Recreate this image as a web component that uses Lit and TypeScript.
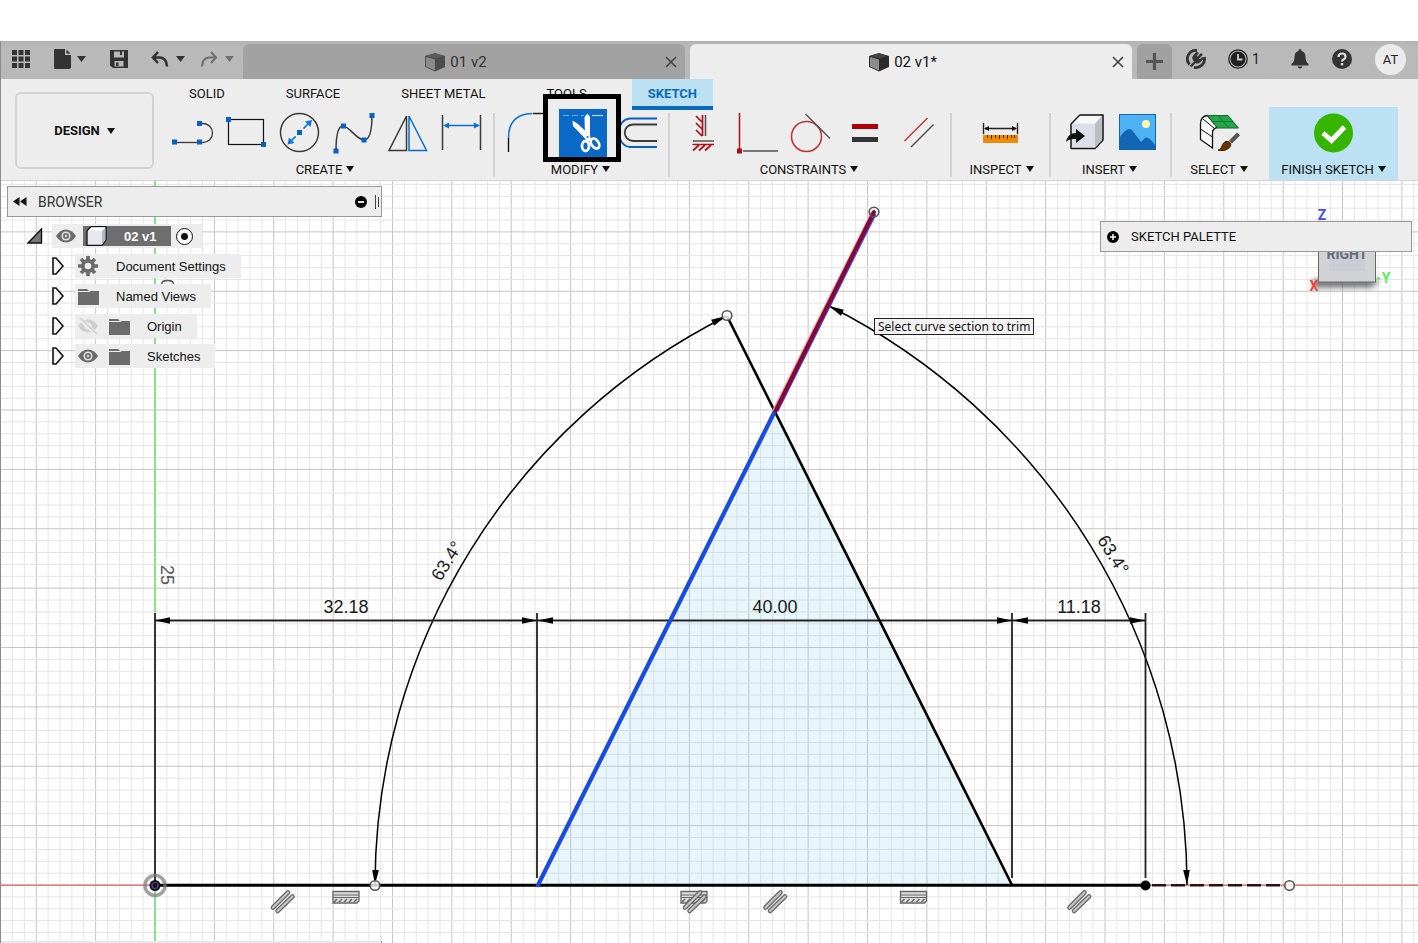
import { LitElement, html, svg, css } from "lit";
import { customElement } from "lit/decorators.js";
import { classMap } from "lit/directives/class-map.js";

const BLUE = "#0a5fc4";
const DARK = "#3a3a3a";
const RED = "#b01118";

const dot = (x: number, y: number, fill = BLUE) =>
  svg`<rect x=${x - 2.5} y=${y - 2.5} width="5" height="5" fill=${fill} />`;

const tool: Record<string, unknown> = {
  line: svg`<g fill="none" stroke=${DARK} stroke-width="1.3"><path d="M9 33.5H35" /><path d="M35 14.5H38A9.5 9.5 0 0 1 38 33.5H35" /></g>${dot(9.5, 33)}${dot(34.5, 33)}${dot(34.5, 14.5)}`,
  rect: svg`<rect x="9.5" y="10.5" width="35" height="25" fill="none" stroke="#111" stroke-width="1.2" />${dot(9.5, 10.5)}${dot(44.5, 35.5)}`,
  circle: svg`<circle cx="26.5" cy="23.5" r="19" fill="none" stroke=${DARK} stroke-width="1.5" /><path d="M17 33L36 14" stroke="#0a78e0" stroke-width="1.6" stroke-dasharray="8 3 5 3 8" /><path d="M39 11L37.5 18L32 12.500ZM14.500 35.500L16 28.500L21.500 34Z" fill="#0a78e0" />${dot(26.5, 23.5)}`,
  spline: svg`<path d="M9 42C9 30 10 17 16 17S30 31 37 31S45 16 45 6" fill="none" stroke=${DARK} stroke-width="1.500" />${dot(9, 42)}${dot(16.5, 17)}${dot(37, 31)}${dot(45, 6.5)}`,
  mirror: svg`<path d="M25.500 7V41.500H8Z" fill="none" stroke=${DARK} stroke-width="1.500" /><path d="M28 7V41.500H45.500Z" fill="none" stroke="#0a6ed0" stroke-width="1.500" />`,
  dimension: svg`<path d="M7.500 6V41M45.500 6V41" stroke=${DARK} stroke-width="1.500" /><path d="M11 16.500H42" stroke="#0a6ed0" stroke-width="1.500" /><path d="M8 16.500L14 13.500V19.500ZM45 16.500L39 13.500V19.500Z" fill="#0a6ed0" />`,
  fillet: svg`<path d="M8.500 29V43" stroke="#111" stroke-width="1.400" /><path d="M8.500 29C8.500 14 16 5 32 4.500" fill="none" stroke="#0a6ed0" stroke-width="1.500" /><path d="M33 4.500H48" stroke="#111" stroke-width="1.400" />`,
  trim: svg`<rect x="5" y="0" width="48" height="48" fill="#0a69c4" /><path d="M9 6.500H30" stroke="#5fb2ec" stroke-width="1.200" stroke-dasharray="6 3" /><path d="M38 6.500H49" stroke="#c3d9c9" stroke-width="1.200" /><path d="M30.500 8L33.500 4.500L36 8V29H31ZM18.500 11.500L24 15L36.500 27L32.500 31L19 17Z" fill="#fff" /><g fill="none" stroke="#fff" stroke-width="2.800"><ellipse cx="31.500" cy="37" rx="3.500" ry="5" /><ellipse cx="41" cy="34.500" rx="3.500" ry="5.500" transform="rotate(-35 41 34.500)" /></g><path d="M31 28L35 26L38 31L33 33Z" fill="#fff" /><circle cx="33.500" cy="28" r="1" fill="#0a69c4" />`,
  offset: svg`<path d="M49 9.500H22C7 11 7 36 22 38H49" fill="none" stroke="#0a5fc4" stroke-width="1.800" /><path d="M49 15.500H25C14 16 14 31 25 32H49" fill="none" stroke=${DARK} stroke-width="1.800" />`,
  fix: svg`<g fill="none"><path d="M26.500 6V27M20 7L26 13M20 14L26 20M20 21L26 27M16.500 35.500H38M23 36L17 41.500M29 36L23 41.500M35 36L29 41.500" stroke=${RED} stroke-width="1.700" /><path d="M29.500 6V27M17 32H38" stroke="#505050" stroke-width="1.500" /></g>`,
  perpendicular: svg`<path d="M9.500 4V41" stroke=${RED} stroke-width="1.500" /><path d="M13 42H48" stroke="#505050" stroke-width="1.500" />${dot(9.5, 42, "#a80f14")}`,
  tangent: svg`<circle cx="22.500" cy="27.500" r="15" fill="none" stroke="#c0303a" stroke-width="1.500" /><path d="M21.500 5L46 29.500" stroke="#505050" stroke-width="1.500" />`,
  equal: svg`<rect x="14" y="15" width="26" height="5" fill="#b00008" /><rect x="14" y="28" width="26" height="5" fill="#333" />`,
  parallel: svg`<path d="M12.500 32L35.500 9" stroke="#c0303a" stroke-width="1.500" /><path d="M19 38L41.500 15.500" stroke="#505050" stroke-width="1.500" />`,
  measure: svg`<path d="M10.500 14V25M44.500 14V25M12 19.500H43" stroke="#222" stroke-width="1.400" /><path d="M11 19.500L16 17V22ZM44 19.500L39 17V22Z" fill="#111" /><rect x="10" y="26" width="35" height="8" fill="#f08a05" /><path d="M14.500 26v3M18.500 26v4M22.500 26v3M26.500 26v4M30.500 26v3M34.500 26v4M38.500 26v3M41.500 26v3" stroke="#4a2a00" />`,
  insert: svg`<path d="M24 6H47V31L39 39.500H15V15Z" fill="#e9ebf0" stroke="#111" stroke-width="1.500" stroke-linejoin="round" /><path d="M46 7L39 15V39L46 31Z" fill="#b9bdc8" /><path d="M16 15H39V38H16Z" fill="#dcdfe7" /><path d="M24 7H45L38.500 14.500H17Z" fill="#f8f8fa" /><path d="M10 33C11 27 15 24 20 24V20L29 27L20 34V30C16 30 13 30 10 33Z" fill="#111" />`,
  image: svg`<rect x="9.500" y="5.500" width="36" height="35" fill="#4fb2f5" stroke="#1464b4" /><path d="M10 28C14 22 19 18 22 21L31 33L35 29C38 27 42 32 45 36V40H10Z" fill="#1266b5" /><circle cx="36" cy="15" r="4" fill="#fdf7b0" />`,
  select: svg`<path d="M15.500 6.500C10 7 8.500 11 8.500 15V30.500L20.500 39V24C20.500 21 22 19 25.500 18.500Z" fill="#fafafa" stroke="#111" stroke-width="1.300" /><path d="M8.500 20L20.500 28M11 10L22 19" stroke="#111" stroke-width="1" /><path d="M15.500 6.500H36L46.500 19H25.500Z" fill="#27a54a" stroke="#0c6a28" stroke-width="1" /><path d="M26 6.500L37 19M20 12.500H41" stroke="#0f7a30" /><path d="M38.500 33L46.500 25" stroke="#555" stroke-width="4" /><path d="M26 41C31 40 29 34 34 32.500C39 32 40 36 37.500 38.500C34 42 29 42 26 41Z" fill="#6a3208" stroke="#3e1c04" />`,
  finish: svg`<circle cx="26.500" cy="24" r="19.500" fill="#35b400" /><path d="M16 24L24.500 31.500L37.500 18" fill="none" stroke="#fff" stroke-width="5" />`,
};

interface Group { name: string; title: string; tools: [string, string][] }
const groups: Group[] = [
  { name: "create", title: "CREATE", tools: [["line", "Line"], ["rect", "Rectangle"], ["circle", "Circle"], ["spline", "Spline"], ["mirror", "Mirror"], ["dimension", "Sketch dimension"]] },
  { name: "modify", title: "MODIFY", tools: [["fillet", "Fillet"], ["trim", "Trim"], ["offset", "Offset"]] },
  { name: "constraints", title: "CONSTRAINTS", tools: [["fix", "Horizontal/Vertical"], ["perpendicular", "Perpendicular"], ["tangent", "Tangent"], ["equal", "Equal"], ["parallel", "Parallel"]] },
  { name: "inspect", title: "INSPECT", tools: [["measure", "Measure"]] },
  { name: "insert", title: "INSERT", tools: [["insert", "Insert derive"], ["image", "Canvas"]] },
  { name: "select", title: "SELECT", tools: [["select", "Select"]] },
  { name: "finish", title: "FINISH SKETCH", tools: [["finish", "Finish sketch"]] },
];

const base = css`
  :host { display: block; font-family: Roboto, "Liberation Sans", sans-serif; color: #111; }
  *, *::before { box-sizing: border-box; }
  button { border: 0; padding: 0; margin: 0; background: none; font: inherit; color: inherit; display: flex; align-items: center; justify-content: center; }
  svg { display: block; flex: none; }
`;

const docCube = (active: boolean) => html`<svg width="20" height="20" viewBox="0 0 20 20" aria-hidden="true">
  <path d="M0 4L10 1L20 4V15L10 19.500L0 15Z" fill=${active ? "#2b2b2b" : "#4c4c4c"} />
  <path d="M1 5L10 7.500V18.500L1 14.500Z" fill=${active ? "#8d8d8d" : "#8a8a8a"} />
  <path d="M1 4L10 1.500L19 4L10 6.500Z" fill=${active ? "#444" : "#5c5c5c"} /></svg>`;

@customElement("title-bar")
class TitleBar extends LitElement {
  static styles = [base, css`
    .bar { display: flex; height: 38px; background: linear-gradient(#b2b2b2, #bababa 6px, #b8b8b8); }
    .quick { display: flex; width: 242px; padding: 0 0 2px 8px; align-items: center; color: #333; }
    .quick button { height: 36px; }
    .apps { width: 24px; margin-right: 16px; }
    .file { width: 40px; gap: 3px; margin-right: 18px; }
    .save { width: 24px; margin-right: 19px; }
    .undo { width: 36px; gap: 7px; margin-right: 13px; }
    .redo { width: 36px; gap: 7px; color: #707070; }
    .tabs { flex: 1; display: flex; gap: 5px; padding-top: 3px; min-width: 0; }
    .tab { flex: 1; display: flex; align-items: center; border-radius: 6px 6px 0 0; background: #a2a2a2; padding-left: 12px; font-size: 15px; color: #333; }
    .tab.active { background: #ededed; color: #111; }
    .name { flex: 1; display: flex; justify-content: center; align-items: center; gap: 5px; height: 34px; }
    .close { width: 28px; height: 34px; }
    .add { width: 35px; background: #a0a0a0; border-radius: 6px 6px 0 0; }
    .right { display: flex; align-items: center; padding: 0 0 2px 3px; color: #333; }
    .right button { width: 42px; height: 32px; font-size: 14px; }
    .right .jobs { width: 62px; gap: 4px; justify-content: flex-start; padding-left: 11px; color: #222; }
    .right .account { width: 55px; }
    .avatar { width: 31px; height: 31px; line-height: 31px; border-radius: 50%; background: #ebebeb; font-size: 13px; text-align: center; color: #222; }
  `];
  caret = html`<svg width="9" height="6" viewBox="0 0 9 6" aria-hidden="true"><path d="M0 0H9L4.500 6Z" fill="currentColor" /></svg>`;
  tab(label: string, active: boolean) {
    return html`<div class=${classMap({ tab: true, active })}>
      <button class="name">${docCube(active)}${label}</button>
      <button class="close" aria-label="Close ${label}"><svg width="12" height="12" viewBox="0 0 12 12"><path d="M1 1L11 11M11 1L1 11" stroke="#444" stroke-width="1.600" /></svg></button>
    </div>`;
  }
  render() {
    return html`<header class="bar">
      <div class="quick">
        <button class="apps" aria-label="Data panel"><svg width="18" height="18" viewBox="0 0 18 18"><path fill="currentColor" d="M0 0h5v5H0zM6.500 0h5v5h-5zM13 0h5v5h-5zM0 6.500h5v5H0zM6.500 6.500h5v5h-5zM13 6.500h5v5h-5zM0 13h5v5H0zM6.500 13h5v5h-5zM13 13h5v5h-5z" /></svg></button>
        <button class="file" aria-label="File"><svg width="21" height="20" viewBox="0 0 21 20"><path d="M2 0H12V6H18V18Q18 20 16 20H2Q1 20 1 18V1Q1 0 2 0ZM13.500 0.500L17.500 4.500H13.500Z" fill="currentColor" /></svg>${this.caret}</button>
        <button class="save" aria-label="Save"><svg width="18" height="18" viewBox="0 0 18 18"><path fill-rule="evenodd" d="M0 0H18V18H3L0 15.500ZM4 1.500V7.500H14V1.500H12V5H10V1.500ZM4.500 11V16.500H13.500V11ZM6 12.500H8.500V16H6Z" fill="currentColor" /></svg></button>
        <button class="undo" aria-label="Undo"><svg width="18" height="17" viewBox="0 0 18 17"><path d="M7 1L2 6.500L7 12M2 6.500H9Q15.500 7 16 15.500" fill="none" stroke="currentColor" stroke-width="2.600" /></svg>${this.caret}</button>
        <button class="redo" aria-label="Redo"><svg width="18" height="17" viewBox="0 0 18 17"><path d="M11 1L16 6.500L11 12M16 6.500H9Q2.500 7 2 15.500" fill="none" stroke="currentColor" stroke-width="2.200" /></svg>${this.caret}</button>
      </div>
      <nav class="tabs" aria-label="Documents">
        ${this.tab("01 v2", false)}${this.tab("02 v1*", true)}
        <button class="add" aria-label="New document"><svg width="17" height="17" viewBox="0 0 17 17"><path d="M8.500 0V17M0 8.500H17" stroke="#555" stroke-width="3.200" /></svg></button>
      </nav>
      <div class="right">
        <button aria-label="Extensions"><svg width="20" height="20" viewBox="0 0 20 20"><path d="M11 1.500A8.500 8.500 0 0 0 3.500 15.500M8 18.300A8.500 8.500 0 0 0 18.300 8" fill="none" stroke="currentColor" stroke-width="2.800" /><path d="M3.500 17L8 12.500Q4.500 9 8 5.500L11 2.500L12.800 4.200L10.500 7L11.300 7.800L15 4L16.800 5.800L13 9.500L13.800 10.300L16.500 8L18 9.500L14.500 13Q11.500 15.500 9.500 14L6 18Z" fill="currentColor" /></svg></button>
        <button class="jobs"><svg width="20" height="20" viewBox="0 0 20 20" aria-hidden="true"><circle cx="10" cy="10" r="9.200" fill="none" stroke="currentColor" stroke-width="1.300" /><circle cx="10" cy="10" r="7.500" fill="currentColor" /><path d="M10 5V10.500H14.500" fill="none" stroke="#ccc" stroke-width="1.800" /></svg>1</button>
        <button aria-label="Notifications"><svg width="18" height="20" viewBox="0 0 18 20"><path d="M9 0Q10.500 0 10.500 2Q14.500 3 14.500 8Q14.500 13 17.500 15V16.500H0.500V15Q3.500 13 3.500 8Q3.500 3 7.500 2Q7.500 0 9 0ZM6.500 17.500H11.500Q11 19.500 9 19.500T6.500 17.500Z" fill="currentColor" /></svg></button>
        <button aria-label="Help"><svg width="20" height="20" viewBox="0 0 20 20"><circle cx="10" cy="10" r="10" fill="currentColor" /><path d="M6.500 8Q6.500 4.500 10 4.500T13.500 7.500Q13.500 9.500 11.500 10.500Q10 11.300 10 12.500" fill="none" stroke="#ddd" stroke-width="2.200" /><rect x="8.800" y="14" width="2.400" height="2.400" fill="#ddd" /></svg></button>
        <button class="account" aria-label="Account"><span class="avatar">AT</span></button>
      </div>
    </header>`;
  }
}

@customElement("tool-ribbon")
class ToolRibbon extends LitElement {
  static styles = [base, css`
    .ribbon { display: flex; background: #ededed; font-size: 13px; border-bottom: 1px solid #d4d4d4; }
    .design { width: 139px; height: 77px; margin: 13px 1px 0 14px; border: 2px solid #d2d2d2; border-radius: 6px; font-weight: 700; gap: 7px; }
    .main { flex: 1; min-width: 0; }
    .tabs { display: flex; height: 28px; gap: 29px; padding-left: 18px; }
    .tabs button { height: 28px; padding: 0 16px; }
    .tabs .current { height: 31px; padding-top: 1px; background: #bbe1f2; border-bottom: 4px solid #0a69b8; color: #0a69b8; font-weight: 700; }
    .groups { display: flex; height: 73px; }
    .group { position: relative; padding-top: 2px; flex: none; }
    .group:not(.finish):not(.select)::after { content: ""; position: absolute; right: 0; top: 6px; width: 2px; height: 64px; background: #d3d3d3; }
    .tools { display: flex; justify-content: center; height: 48px; }
    .create .tools { padding-left: 4px; }
    .modify .tools, .inspect .tools, .insert .tools { padding-right: 3px; }
    .title { width: 100%; height: 24px; gap: 4px; }
    .modify .title, .constraints .title, .insert .title { padding-right: 4px; }
    .create { width: 340px; } .modify { width: 175px; } .constraints { width: 282px; }
    .inspect { width: 99px; } .insert { width: 121px; } .select { width: 94px; margin-right: 3px; }
    .finish { width: 129px; background: #bbe1f2; }
    .callout { position: absolute; left: 50%; top: -13px; width: 78px; height: 68px; margin-left: -40px; border: 5px solid #000; pointer-events: none; }
  `];
  caret = html`<svg width="8" height="6" viewBox="0 0 8 6" aria-hidden="true"><path d="M0 0H8L4 6Z" fill="#111" /></svg>`;
  render() {
    return html`<div class="ribbon">
      <button class="design">DESIGN ${this.caret}</button>
      <div class="main">
        <nav class="tabs" aria-label="Workspace tabs">
          ${["SOLID", "SURFACE", "SHEET METAL", "TOOLS", "SKETCH"].map((t) => html`<button class=${classMap({ current: t === "SKETCH" })}>${t}</button>`)}
        </nav>
        <div class="groups">
          ${groups.map((g) => html`<section class="group ${g.name}">
            <div class="tools">${g.tools.map(([id, label]) => html`<button aria-label=${label}><svg width="54" height="48" viewBox="0 0 54 48">${tool[id]}</svg></button>`)}</div>
            <button class="title">${g.title}${this.caret}</button>
            ${g.name === "modify" ? html`<div class="callout"></div>` : ""}
          </section>`)}
        </div>
      </div>
    </div>`;
  }
}

const eye = html`<svg width="20" height="14" viewBox="0 0 20 14"><path d="M0 7Q4 0.500 10 0.500T20 7Q16 13.500 10 13.500T0 7Z" fill="#6b6b6b" /><circle cx="10" cy="7" r="4.500" fill="#e4e4e4" /><circle cx="10" cy="7" r="3" fill="#6b6b6b" /><circle cx="10" cy="7" r="1.200" fill="#ddd" /></svg>`;
const eyeOff = html`<svg width="20" height="16" viewBox="0 0 20 16"><path d="M0 8Q4 1.500 10 1.500T20 8Q16 14.500 10 14.500T0 8Z" fill="#cfcfcf" /><circle cx="10" cy="8" r="3.500" fill="#ededed" /><path d="M1 0L18 16" stroke="#ededed" stroke-width="4" /><path d="M2 0L19 16" stroke="#cfcfcf" stroke-width="1.600" /></svg>`;
const folder = html`<svg width="21" height="17" viewBox="0 0 21 17"><path d="M0 1H9L11 3H0ZM0 4H11L13 3H21V17H0Z" fill="#6b6b6b" /></svg>`;
const gear = html`<svg width="20" height="20" viewBox="0 0 20 20"><g stroke="#6b6b6b" stroke-width="3.600"><path d="M10 0V20M0 10H20M3 3L17 17M17 3L3 17" /></g><circle cx="10" cy="10" r="7" fill="#6b6b6b" /><circle cx="10" cy="10" r="3.300" fill="#ededed" /></svg>`;

@customElement("browser-panel")
class BrowserPanel extends LitElement {
  static styles = [base, css`
    :host { width: 375px; font-size: 14px; }
    .head { display: flex; align-items: center; height: 31px; border: 1px solid #999; background: #ededed; padding: 0 2px 0 5px; gap: 11px; margin-bottom: 7px; }
    .head h2 { flex: 1; margin: 0; font-size: 14px; font-weight: 400; color: #333; }
    .head .grip { margin-left: -3px; }
    ul { list-style: none; margin: 0; padding: 0; font: 13px "Liberation Sans", Arial, sans-serif; }
    li { display: flex; align-items: center; height: 24px; margin-bottom: 6px; }
    .open { width: 16px; height: 16px; margin-left: 20px; }
    .fold { width: 12px; height: 18px; margin-left: 45px; }
    .item { display: flex; align-items: center; height: 24px; background: #ededed; margin-left: 11px; padding: 0 15px 0 3px; }
    .item button { width: 20px; height: 20px; margin-right: 11px; }
    .folder { margin-right: 7px; width: 21px; }
    .label { margin-left: 10px; }
    .root { margin-left: 9px; padding: 0 9px 0 4px; gap: 4px; }
    .root button { margin-right: 3px; }
    .chip { display: flex; align-items: center; height: 20px; width: 88px; margin: 0; padding-left: 3px; gap: 17px; background: #6e6e6e; color: #fff; font-weight: 700; }
    input { appearance: none; width: 17px; height: 17px; margin: 0 0 0 1px; border: 1.5px solid #111; border-radius: 50%; background: radial-gradient(circle, #111 0 3px, #fff 4px); }
  `];
  fold = html`<button class="fold" aria-label="Expand"><svg width="12" height="18" viewBox="0 0 12 18"><path d="M1 1H4L11 9L4 17H1Z" fill="#f4f4f4" stroke="#111" stroke-width="1.600" /></svg></button>`;
  row(icon: unknown, label: string, vis?: unknown) {
    return html`<li>${this.fold}<div class="item">${vis ? html`<button aria-label="Toggle ${label}">${vis}</button>` : ""}<span class="folder">${icon}</span><span class="label">${label}</span></div></li>`;
  }
  render() {
    return html`<div class="head">
        <button aria-label="Collapse browser"><svg width="14" height="9" viewBox="0 0 14 9"><path d="M6.500 0V9L0 4.500ZM13.500 0V9L7 4.500Z" fill="#111" /></svg></button>
        <h2>BROWSER</h2>
        <button aria-label="Minimize"><svg width="12" height="12" viewBox="0 0 12 12"><circle cx="6" cy="6" r="6" fill="#000" /><path d="M3 6H9" stroke="#fff" stroke-width="1.800" /></svg></button>
        <svg class="grip" width="4" height="14" viewBox="0 0 4 14"><path d="M0.500 0V14M3.500 2V12" stroke="#444" /></svg>
      </div>
      <ul>
        <li><button class="open" aria-label="Collapse"><svg width="16" height="16" viewBox="0 0 16 16"><path d="M14.500 1V15H1Z" fill="#777" stroke="#111" stroke-width="1.400" /></svg></button>
          <div class="item root"><button aria-label="Toggle 02 v1">${eye}</button>
            <label class="chip" for="active"><svg width="21" height="20" viewBox="0 0 21 20"><path d="M5 0.700H20V14L16 19.300H1V5Z" fill="#e6e8ee" stroke="#111" stroke-width="1.300" /><path d="M5.500 1.500H19L15.500 5H2Z" fill="#fff" /><path d="M19.300 2V14L16 18.500V5Z" fill="#b4b8c4" /></svg>02 v1</label>
            <input id="active" type="radio" checked /></div></li>
        ${this.row(gear, "Document Settings")}
        ${this.row(folder, "Named Views")}
        ${this.row(folder, "Origin", eyeOff)}
        ${this.row(folder, "Sketches", eye)}
      </ul>`;
  }
}

const UNIT = 11.875;
const OX = 155;
const OY = 885;

@customElement("sketch-canvas")
class SketchCanvas extends LitElement {
  static styles = [base, css`
    :host { position: relative; overflow: hidden; background: #fff; }
    .sheet { position: absolute; inset: 0; width: 100%; height: 100%; }
    .dim { font: 18px "Liberation Sans", sans-serif; fill: #1a1a1a; text-anchor: middle; }
    .ruler { font: 18px "Liberation Sans", sans-serif; fill: #555; text-anchor: middle; }
    .axis { font: 700 14px Roboto, sans-serif; text-anchor: middle; }
    .face { font: 700 14px Roboto, sans-serif; fill: #666c78; text-anchor: middle; }
    .soft { filter: blur(3px); }
    .browser { position: absolute; left: 6px; top: 5px; }
    .palette { position: absolute; right: 6px; top: 40px; width: 312px; height: 31px; display: flex; align-items: center; gap: 12px; padding-left: 6px; border: 1px solid #999; background: #ededed; }
    .palette h2 { margin: 0; font-size: 13px; font-weight: 400; }
    .tip { position: absolute; left: 873px; top: 137px; height: 17px; padding: 0 3px; border: 1px solid #222; background: #f2f2f2; font: 12px/16px "Noto Sans", "Open Sans", sans-serif; white-space: nowrap; }
    .comments { position: absolute; left: 0; bottom: 0; width: 381px; height: 2px; background: #e9e9e9; border-right: 1px solid #999; }
  `];
  grid() {
    const lines = [];
    for (let i = -14; i <= 220; i++) {
      const x = OX + i * UNIT;
      lines.push(svg`<path d="M${x} 181V2000" stroke=${i % 5 ? "#e7e7e7" : "#c6c6c6"} />`);
    }
    for (let i = -90; i <= 60; i++) {
      const y = OY + i * UNIT;
      lines.push(svg`<path d="M0 ${y}H2700" stroke=${i % 5 ? "#e4e4e4" : "#c6c6c6"} />`);
    }
    return lines;
  }
  arrow(x: number, y: number, angle: number) {
    return svg`<path d="M0 0L-15 -3.300V3.300Z" transform="translate(${x} ${y}) rotate(${angle})" fill="#000" />`;
  }
  slashes(x: number, y: number) {
    return svg`<g transform="translate(${x} ${y})" stroke-linecap="round"><path d="M-8.500 6.500L6.500 -8.500M-4 10L11 -4.500" stroke="#666" stroke-width="4.600" /><path d="M-8.500 6.500L6.500 -8.500M-4 10L11 -4.500" stroke="#c4c4c4" stroke-width="2.200" /></g>`;
  }
  level(x: number, y: number) {
    return svg`<g transform="translate(${x} ${y})" fill="none" stroke="#666"><path d="M-13 -5.500H13V4L11 6H-13Z" fill="#dedede" stroke-width="1.300" /><path d="M-13 -2H13M-13 0.500H13" /><path d="M-9 2L-12 5M-4 2L-7 5M1 2L-2 5M6 2L3 5M11 2L8 5" stroke-width="1.500" /></g>`;
  }
  render() {
    return html`<svg class="sheet" viewBox="1 181 1417 762" preserveAspectRatio="xMinYMin slice" role="img" aria-label="Sketch">
        <g>${this.grid()}</g>
        <path d="M155 181V612M155 885V2000" stroke="#6fe06f" stroke-width="1.500" />
        <path d="M0 885.300H155M1145 885.300H2700" stroke="#e07a7a" stroke-width="1.600" />
        <path d="M775 411L538 885H1012Z" fill="#8ccbe8" fill-opacity="0.200" />
        <text class="ruler" transform="translate(161 575) rotate(90)">25</text>
        <text class="ruler" transform="translate(161 279) rotate(90)">50</text>
        <g fill="none" stroke="#000">
          <path d="M375 885A637 637 0 0 1 727 316M1187 885A649 649 0 0 0 829 306" stroke-width="1.500" />
          <path d="M155 620.500H1145" stroke="#222" stroke-width="2" />
          <path d="M155 613V885M537 613V878M1012 613V878M1145.500 613V878" stroke="#222" stroke-width="1.800" />
          <path d="M155 885.300H1145" stroke-width="3" />
          <path d="M727 316L1012 885" stroke-width="2.600" />
          <path d="M1152 885.300H1286" stroke="#2a1010" stroke-width="2.400" stroke-dasharray="14 5" />
        </g>
        ${this.arrow(155, 620.5, 180)}${this.arrow(537, 620.5, 0)}${this.arrow(538, 620.5, 180)}${this.arrow(1012, 620.5, 0)}${this.arrow(1013, 620.5, 180)}${this.arrow(1145, 620.5, 0)}
        ${this.arrow(375, 885, 92)}${this.arrow(1187, 885, 88)}${this.arrow(726, 316, -27)}${this.arrow(829, 306, 207)}
        <path d="M538 885L775 411" stroke="#1a4be0" stroke-width="4.200" stroke-linecap="round" />
        <path d="M774 411L873 212" stroke="#f3a0ac" stroke-width="4" />
        <path d="M777 411L875 214" stroke="#5a3fd8" stroke-width="3" />
        <path d="M775.500 411L874 212" stroke="#7d0c35" stroke-width="4" stroke-linecap="round" />
        <text class="dim" x="346" y="613">32.18</text>
        <text class="dim" x="775" y="613">40.00</text>
        <text class="dim" x="1079" y="613">11.18</text>
        <text class="dim" transform="translate(452 564) rotate(-58)">63.4°</text>
        <text class="dim" transform="translate(1108 558) rotate(58)">63.4°</text>
        <g fill="#fff" fill-opacity="0.800" stroke="#555" stroke-width="1.600">
          <circle cx="727" cy="315.500" r="4.800" /><circle cx="375" cy="885.500" r="4.800" /><circle cx="1289.500" cy="885.500" r="4.800" />
          <circle cx="874" cy="212" r="4.800" fill="none" />
        </g>
        <circle cx="1145.500" cy="885.500" r="5" fill="#000" />
        <circle cx="155" cy="885.500" r="10" fill="none" stroke="#777" stroke-opacity="0.700" stroke-width="3.500" />
        <circle cx="155" cy="885.500" r="5.500" fill="#111" /><circle cx="155" cy="885.500" r="3" fill="none" stroke="#5a3f9a" stroke-width="1.200" />
        ${this.slashes(281.5, 901)}${this.level(346, 897)}${this.level(694, 897)}${this.slashes(693.5, 901)}${this.slashes(774, 901)}${this.level(913.5, 897)}${this.slashes(1078, 901)}
        <path class="soft" d="M1314 280H1380L1372 287H1312Z" fill="#555" />
        <rect x="1318.500" y="225" width="57" height="57" fill="#d2d3d5" stroke="#666" />
        <rect x="1329" y="235" width="36" height="36" fill="#c6cad4" opacity="0.600" />
        <text class="face" x="1347" y="259">RIGHT</text>
        <text class="axis" x="1322" y="220" fill="#4a4ae6">Z</text>
        <text class="axis" x="1386" y="283" fill="#58ee58">Y</text>
        <path d="M1377 278.500H1380" stroke="#58ee58" stroke-width="2" />
        <text class="axis" x="1314" y="291" fill="#ee4444">X</text>
      </svg>
      <div class="tip" role="tooltip">Select curve section to trim</div>
      <browser-panel class="browser"></browser-panel>
      <section class="palette"><button aria-label="Expand palette"><svg width="12" height="12" viewBox="0 0 12 12"><circle cx="6" cy="6" r="6" fill="#000" /><path d="M3 6H9M6 3V9" stroke="#fff" stroke-width="1.500" /></svg></button><h2>SKETCH PALETTE</h2></section>
      <div class="comments"></div>`;
  }
}

@customElement("app-root")
class AppRoot extends LitElement {
  static styles = [base, css`
    :host { display: flex; flex-direction: column; min-height: 100vh; padding-top: 41px; background: #fff; box-sizing: border-box; }
    .window { flex: 1; display: flex; flex-direction: column; border-left: 1px solid #8c8c8c; }
    .canvas { flex: 1; }
  `];
  render() {
    return html`<main class="window"><title-bar></title-bar><tool-ribbon></tool-ribbon><sketch-canvas class="canvas"></sketch-canvas></main>`;
  }
}
